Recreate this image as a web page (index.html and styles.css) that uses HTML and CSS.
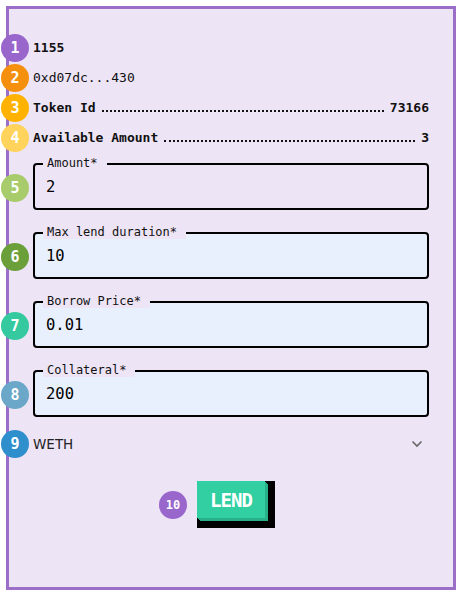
FILE: index.html
```html
<!DOCTYPE html>
<html>
<head>
<meta charset="utf-8">
<link rel="stylesheet" href="styles.css">
</head>
<body>
<div class="card">
  <div class="row"><span class="badge b1">1</span><span class="strong">1155</span></div>
  <div class="row"><span class="badge b2">2</span><span>0xd07dc...430</span></div>
  <div class="row"><span class="badge b3">3</span><span class="strong">Token Id</span><span class="leader"></span><span class="strong">73166</span></div>
  <div class="row"><span class="badge b4">4</span><span class="strong">Available Amount</span><span class="leader"></span><span class="strong">3</span></div>

  <div class="field first">
    <span class="badge fb b5">5</span>
    <span class="flabel">Amount*</span>
    <input class="fvalue" value="2" readonly>
  </div>
  <div class="field filled">
    <span class="badge fb b6">6</span>
    <span class="flabel">Max lend duration*</span>
    <input class="fvalue" value="10" readonly>
  </div>
  <div class="field filled">
    <span class="badge fb b7">7</span>
    <span class="flabel">Borrow Price*</span>
    <input class="fvalue" value="0.01" readonly>
  </div>
  <div class="field filled">
    <span class="badge fb b8">8</span>
    <span class="flabel">Collateral*</span>
    <input class="fvalue" value="200" readonly>
  </div>

  <div class="select">
    <span class="badge b9">9</span>
    <span class="select-text">WETH</span>
    <svg class="chevron" width="12" height="8" viewBox="0 0 12 8"><polyline points="1.5,1.5 6,6 10.5,1.5" fill="none" stroke="#666" stroke-width="1.6"/></svg>
  </div>

  <div class="actions">
    <div class="btn-wrap">
      <span class="badge b10">10</span>
      <button class="lend">LEND</button>
    </div>
  </div>
</div>
</body>
</html>
```

FILE: styles.css
```css
html, body {
  margin: 0;
  padding: 0;
  background: #ffffff;
}
body {
  padding: 6px;
}
.card {
  width: 450px;
  height: 584px;
  box-sizing: border-box;
  border: 3px solid #9b6fc8;
  background: #ede4f5;
  padding: 24px 24px 0 24px;
  display: flex;
  flex-direction: column;
  font-family: "DejaVu Sans Mono", monospace;
  color: #111;
}
.row {
  position: relative;
  height: 30px;
  display: flex;
  align-items: baseline;
  font-size: 13px;
  line-height: 30px;
}
.strong {
  font-weight: bold;
}
.leader {
  flex: 1;
  height: 0;
  border-bottom: 2px dotted #111;
  margin: 0 6px;
}
.badge {
  position: absolute;
  left: -32px;
  top: 50%;
  margin-top: -14px;
  width: 28px;
  height: 28px;
  border-radius: 50%;
  color: #fff;
  font-family: "DejaVu Sans Mono", monospace;
  font-weight: bold;
  font-size: 15px;
  line-height: 28px;
  text-align: center;
}
.b1 { background: #9966cc; }
.b2 { background: #f5900f; }
.b3 { background: #ffb300; }
.b4 { background: #ffd35c; }
.b5 { background: #a8cc6b; }
.b6 { background: #6a9f3a; }
.b7 { background: #35c9a0; }
.b8 { background: #6ba7c9; }
.b9 { background: #2f8fcc; }
.b10 { background: #9966cc; font-size: 12px; left: -38px; top: 10px; margin-top: 0; }
.field {
  position: relative;
  height: 47px;
  box-sizing: border-box;
  border: 2px solid #000;
  border-radius: 4px;
  margin-top: 22px;
  display: flex;
  align-items: center;
}
.field.first {
  margin-top: 10px;
}
.field.filled {
  background: #e8f0fe;
}
.fb {
  left: -34px;
  margin-top: -13px;
}
.flabel {
  position: absolute;
  left: 8px;
  top: -8px;
  height: 13px;
  line-height: 13px;
  padding: 0 9px 0 4px;
  background: #ede4f5;
  font-size: 12px;
  color: #111;
}
.fvalue {
  border: 0;
  outline: none;
  background: transparent;
  padding: 0 0 0 11px;
  margin: 0;
  width: 100%;
  font-family: "DejaVu Sans Mono", monospace;
  font-size: 15.5px;
  color: #000;
}
.select {
  position: relative;
  height: 28px;
  margin-top: 13px;
  display: flex;
  align-items: center;
  justify-content: space-between;
}
.select-text {
  font-family: "DejaVu Sans", sans-serif;
  font-size: 13.5px;
  color: #222;
}
.chevron {
  margin-right: 6px;
}
.actions {
  margin-top: 23px;
  display: flex;
  justify-content: center;
}
.btn-wrap {
  position: relative;
}
.lend {
  display: block;
  width: 68px;
  height: 37px;
  border: 0;
  padding: 0;
  background: #31cfa1;
  color: #fff;
  font-family: "DejaVu Sans Mono", monospace;
  font-weight: bold;
  font-size: 19px;
  letter-spacing: -1px;
  box-shadow: 1px 1px 0 #28b088, 2px 2px 0 #28b088, 3px 3px 0 #28b088, 5px 5px 0 5px #000;
}
```
